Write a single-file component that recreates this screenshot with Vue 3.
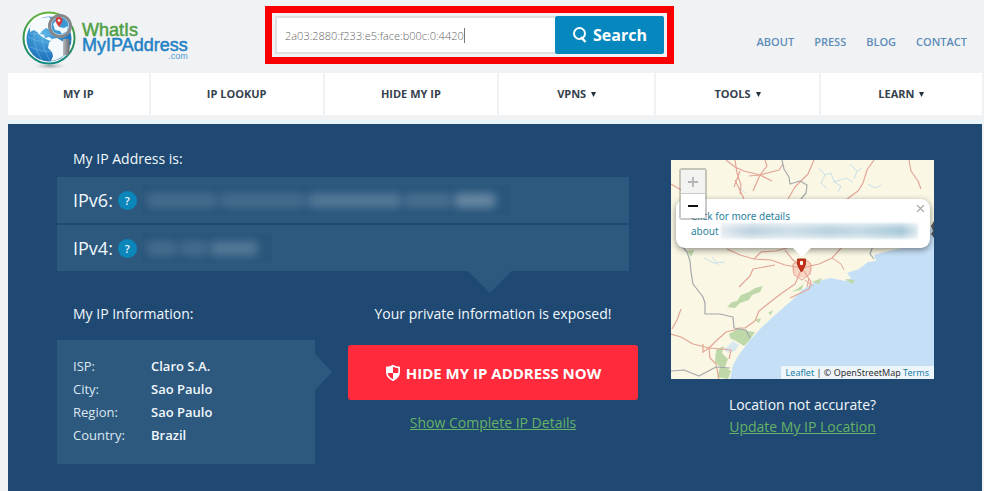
<script setup>
import { ref } from 'vue'

const query = ref('2a03:2880:f233:e5:face:b00c:0:4420')

const topLinks = ['ABOUT', 'PRESS', 'BLOG', 'CONTACT']

const menu = [
  { label: 'MY IP', sub: false },
  { label: 'IP LOOKUP', sub: false },
  { label: 'HIDE MY IP', sub: false },
  { label: 'VPNS', sub: true },
  { label: 'TOOLS', sub: true },
  { label: 'LEARN', sub: true },
]

const details = [
  { name: 'ISP:', value: 'Claro S.A.' },
  { name: 'City:', value: 'Sao Paulo' },
  { name: 'Region:', value: 'Sao Paulo' },
  { name: 'Country:', value: 'Brazil' },
]
</script>

<template>
  <div class="page">
    <header class="header">
      <a class="logo" href="#" aria-label="WhatIsMyIPAddress.com">
        <svg class="globe" viewBox="0 0 60 60" aria-hidden="true">
          <defs>
            <radialGradient id="sea" cx="40%" cy="35%" r="70%">
              <stop offset="0" stop-color="#58b4e8" />
              <stop offset="1" stop-color="#1569b4" />
            </radialGradient>
            <linearGradient id="ring" x1="0" y1="0" x2="0" y2="1">
              <stop offset="0" stop-color="#62b33c" />
              <stop offset="0.55" stop-color="#2f9052" />
              <stop offset="1" stop-color="#128b87" />
            </linearGradient>
            <radialGradient id="shade">
              <stop offset="0" stop-color="#9a9da0" />
              <stop offset="1" stop-color="#f1f2f4" stop-opacity="0" />
            </radialGradient>
            <linearGradient id="grip" x1="0" y1="0" x2="1" y2="0">
              <stop offset="0" stop-color="#b9bbbd" />
              <stop offset="1" stop-color="#696c70" />
            </linearGradient>
          </defs>
          <ellipse cx="29" cy="56" rx="19" ry="4" fill="url(#shade)" />
          <circle cx="28" cy="28" r="25.500" fill="#fff" stroke="url(#ring)" stroke-width="2" />
          <circle cx="28" cy="29" r="22.500" fill="url(#sea)" />
          <g fill="none" stroke="#8bc9ee" stroke-width="0.5" opacity="0.8">
            <path d="M7 27Q22 36 50 31M9 37Q24 44 47 41M14 18Q10 34 21 50M22 11Q17 31 29 51M8 23Q26 27 50 22" />
          </g>
          <path fill="#fff" d="M9 17L13 11L20 8L28 7L31 10L29 14L32 17L29 20L25 18L21 21L19 24L23 25L24 28L28 27L31 29L29 31L25 29L20 26L16 22L13 20L9 22Z" opacity=".95" />
          <path fill="#fff" d="M31 29L36 28L41 31L46 34L49 36L46 42L41 47L35 50L30 51L32 46L31 42L27 38L28 33Z" opacity=".95" />
          <rect x="42" y="29" width="6.5" height="16" rx="1" fill="url(#grip)" />
          <circle cx="39" cy="16" r="10.500" fill="#d7eefb" stroke="#85898d" stroke-width="3" />
          <circle cx="39" cy="16" r="8.500" fill="#3b98d4" />
          <path fill="#eef8fd" d="M32 14L36 10L40 13L38 17L43 18L47 16L46 21L41 24L39 21L34 20Z" />
          <path fill="#d33c38" d="M38 17Q34.500 12 34.500 10.500A3.500 3.500 0 0 1 41.500 10.500Q41.500 12 38 17Z" />
          <circle cx="38" cy="10.500" r="1.300" fill="#fff" />
        </svg>
        <span class="brand">
          <span class="what">WhatIs</span>
          <span class="addr">MyIPAddress</span>
          <span class="com">.com</span>
        </span>
      </a>

      <form class="search" @submit.prevent>
        <div class="field">
          <input v-model="query" type="text" aria-label="IP address" spellcheck="false" />
          <span class="caret"></span>
        </div>
        <button class="go" type="submit">
          <svg viewBox="0 0 16 18" aria-hidden="true">
            <circle cx="7.500" cy="7.500" r="5.500" fill="none" stroke="#fff" stroke-width="2" />
            <path d="M9 11L13.500 16" stroke="#fff" stroke-width="2.400" />
          </svg>
          Search
        </button>
      </form>

      <nav class="top" aria-label="Site">
        <a v-for="link in topLinks" :key="link" href="#">{{ link }}</a>
      </nav>
    </header>

    <nav class="menu" aria-label="Main">
      <a v-for="item in menu" :key="item.label" href="#">
        {{ item.label }}
        <svg v-if="item.sub" viewBox="0 0 5 5" aria-hidden="true"><path d="M0 0H5L2.500 5Z" fill="#22303c" /></svg>
      </a>
    </nav>

    <main class="hero">
      <section class="left">
        <h2 class="title">My IP Address is:</h2>
        <div class="ips">
          <div class="ip">
            <span>IPv6:</span>
            <button class="help" type="button" aria-label="About IPv6">?</button>
            <span class="veil long"><i></i><i></i><i></i><i></i><i></i></span>
          </div>
          <div class="ip">
            <span>IPv4:</span>
            <button class="help" type="button" aria-label="About IPv4">?</button>
            <span class="veil short"><i></i><i></i><i></i></span>
          </div>
        </div>

        <div class="lower">
          <div>
            <h2 class="title">My IP Information:</h2>
            <dl class="info">
              <template v-for="d in details" :key="d.name">
                <dt>{{ d.name }}</dt>
                <dd>{{ d.value }}</dd>
              </template>
            </dl>
          </div>
          <div class="action">
            <p class="title">Your private information is exposed!</p>
            <button class="hide" type="button">
              <svg viewBox="0 0 16 18" aria-hidden="true">
                <path d="M8 0.800Q11 2.600 15 2.800V8Q15 14 8 17.200Q1 14 1 8V2.800Q5 2.600 8 0.800Z" fill="#fff" />
                <path d="M8 9V15.300Q3.200 13 2.700 9ZM8 9V2.800Q10.500 4 13.300 4.200V9Z" fill="#ff2a3b" />
              </svg>
              HIDE MY IP ADDRESS NOW
            </button>
            <a class="green" href="#">Show Complete IP Details</a>
          </div>
        </div>
      </section>

      <section class="right">
        <div class="map">
          <svg class="tiles" viewBox="0 0 263 219" preserveAspectRatio="xMidYMid slice" aria-hidden="true">
            <rect width="263" height="219" fill="#faf8e4" />
            <g fill="none" stroke="#bcd9ea" stroke-width="1" opacity="0.8">
              <path d="M148 8L154 15L160 13L163 22L170 26L167 32M154 15L150 23L156 29M163 22L175 18L182 22M179 4L186 11L191 8M186 11L183 19M197 24L204 28L211 25M22 10L28 16L26 22M68 28L75 33M33 98L43 103L54 102M41 97L48 106" />
            </g>
            <path fill="#c5dff6" d="M59 219L62 205L67 196L79 180L91 167L104 155L119 142L131 130L144 122L160 118L174 121L180 118L176 113L188 109L197 102L205 101L203 95L218 91L234 87L246 82L256 73L263 66V219Z" />
            <g fill="#bfd8aa">
              <path d="M56 147L61 142L66 141L70 135L78 132L84 128L92 126L89 132L81 135L78 140L69 143L64 148Z" />
              <path d="M58 174L68 168L77 171L84 172L78 181L73 186L65 181L59 178Z" />
              <path d="M45 190L53 186L51 193L57 199L54 207L60 211L57 219L46 217L49 207L44 202Z" />
              <path d="M84 160L90 158L88 163ZM97 153L102 150L100 155ZM120 132L126 129L133 124L130 130ZM141 122L151 118L148 124ZM174 119L184 120L181 124ZM16 91L23 90L20 97ZM184 74L190 77L187 82Z" />
            </g>
            <path d="M57 186L62 181L68 185L64 191L57 193L52 189Z" fill="#d9e7f0" />
            <g fill="none" stroke="#e3a596" stroke-width="1.200" stroke-linejoin="round">
              <path d="M55 0L64 7L73 11L89 15L96 6L94 0M89 15L108 10L112 4M89 15L82 31M89 15L101 21M64 0L66 13L70 25L69 34M64 20L73 39M89 15L78 16M63 27L69 11M143 0L137 14L124 27L117 39" />
              <path d="M203 0L196 10L192 23L187 31L176 39M238 0L240 11L247 21L250 29M0 24L12 31L20 39" />
              <path d="M56 89L69 95L83 99L100 100L114 105L131 108L148 104L161 98L172 86M114 90L121 99L131 108M83 99L90 92L105 91L119 87M131 108L124 124L111 133L98 143L88 151L84 161L74 168L67 168M68 127L79 116L82 109L104 105M131 108L140 122L138 129L119 138" />
              <path d="M122 104L123 115L131 120L139 114L140 104L133 99ZM161 98L170 104L173 110M134 120L142 126M138 118L136 127" stroke-width="1" />
              <path d="M67 169L55 172L45 181L38 188L22 184L10 177L0 174M38 188L39 198L45 204L48 219M38 188L32 192M38 188L50 189L60 190L58 199M10 149L6 160L1 169M32 184L32 193" />
            </g>
            <g fill="none" stroke="#a4a8ab" stroke-width="1.200" stroke-linejoin="round">
              <path d="M111 0L113 9L118 17L119 24L129 21L136 25L135 33L130 39M8 83L16 92L19 101L20 112L22 124L32 137L34 143L34 154L49 154L62 157L63 168L75 170L79 178M0 211L13 210L28 216L45 207L59 208M202 86L199 94L203 99" />
            </g>
            <path fill="#50565c" d="M260 66L263 61V78L260 74L262 71Z" />
            <g class="spot">
              <circle cx="131" cy="108" r="10" fill="#f5a08b" opacity="0.4" />
              <path d="M130.500 112Q127 107 126.500 104V99H134.500V104Q134 107 130.500 112Z" fill="#c93018" stroke="#922512" stroke-width="0.800" />
              <rect x="129" y="101" width="3" height="4" rx="1" fill="#fff" />
            </g>
          </svg>
          <div class="popup">
            <button class="close" type="button" aria-label="Close">
              <svg viewBox="0 0 8 8" aria-hidden="true"><path d="M1 1L7 7M7 1L1 7" stroke="#a5a5a5" stroke-width="1.200" /></svg>
            </button>
            <a href="#">Click for more details</a>
            <div class="about"><a href="#">about</a><span class="smudge"></span></div>
          </div>
          <div class="zoom">
            <button type="button" aria-label="Zoom in" disabled>
              <svg viewBox="0 0 12 12" aria-hidden="true"><path d="M6 1V11M1 6H11" stroke="#b4b4b4" stroke-width="1.800" /></svg>
            </button>
            <button type="button" aria-label="Zoom out">
              <svg viewBox="0 0 12 12" aria-hidden="true"><path d="M1 6H11" stroke="#111" stroke-width="2" /></svg>
            </button>
          </div>
          <div class="credit"><a href="#">Leaflet</a> | © OpenStreetMap <a href="#">Terms</a></div>
        </div>
        <p class="title">Location not accurate?</p>
        <a class="green" href="#">Update My IP Location</a>
      </section>
    </main>
  </div>
</template>

<style>
body {
  background: #f1f2f4;
}
</style>

<style scoped>
* {
  box-sizing: border-box;
}

.page {
  font-family: "Open Sans", "Noto Sans", sans-serif;
  font-size: 13px;
  line-height: 20px;
  color: #f2f8fd;
  padding: 0 2px 0 8px;
  display: flex;
  flex-direction: column;
  min-height: 100vh;
}

a {
  text-decoration: none;
  color: inherit;
}

button {
  font: inherit;
  color: inherit;
  border: 0;
  padding: 0;
  cursor: pointer;
}

.header {
  display: grid;
  grid-template-columns: 257px 409px 1fr;
  height: 73px;
}

.logo {
  display: flex;
  align-items: flex-start;
  padding: 10px 0 0 13px;
}

.globe {
  width: 60px;
  height: 60px;
}

.brand {
  display: flex;
  flex-direction: column;
  font-family: "Liberation Sans", Arial, sans-serif;
  font-size: 18px;
  line-height: 15px;
  padding-top: 13px;
  margin-left: 1px;
  -webkit-text-stroke: 0.5px currentColor;
}

.what {
  color: #4fa045;
}

.addr {
  color: #2382c4;
}

.com {
  align-self: flex-end;
  font-size: 9px;
  line-height: 6px;
  color: #4c9bd0;
  -webkit-text-stroke: 0;
}

.search {
  display: flex;
  align-self: start;
  height: 58px;
  margin-top: 6px;
  padding: 3px;
  border: 7px solid #fa0000;
  background: #f1f2f4;
}

.field {
  flex: 1;
  display: flex;
  align-items: center;
  background: #fff;
  border: 2px solid #dedfe0;
  border-right: 0;
  padding-left: 8px;
}

.field input {
  field-sizing: content;
  min-width: 20px;
  border: 0;
  outline: 0;
  padding: 0;
  background: none;
  font-family: "Open Sans", "Noto Sans", sans-serif;
  font-size: 11px;
  font-weight: 300;
  color: #666;
}

.caret {
  width: 1px;
  height: 15px;
  background: #777;
}

.go {
  width: 109px;
  display: flex;
  align-items: center;
  justify-content: center;
  gap: 5px;
  background: #0688bf;
  border-radius: 2px;
  font-size: 16px;
  font-weight: 700;
  color: #fff;
}

.go svg {
  width: 16px;
  height: 18px;
}

.top {
  display: flex;
  justify-content: flex-end;
  gap: 20px;
  padding: 32px 15px 0 0;
  font-size: 11px;
  font-weight: 600;
  color: #5d8db9;
}

.menu {
  display: grid;
  grid-template-columns: 142fr 174fr 174fr 157fr 164fr 163fr;
  gap: 2px;
  height: 42px;
}

.menu a {
  display: flex;
  align-items: center;
  justify-content: center;
  gap: 5px;
  background: #fff;
  font-size: 11px;
  font-weight: 700;
  color: #35424d;
}

.menu svg {
  width: 5px;
  height: 5px;
}

.hero {
  flex: 1;
  display: grid;
  grid-template-columns: 572fr 263fr;
  column-gap: 42px;
  margin-top: 5px;
  padding: 25px 48px 24px 49px;
  border-top: 4px solid #e8f4fb;
  background: #1f4972;
  background-clip: padding-box;
}

.title {
  margin: 0;
  font-size: 14px;
  line-height: 20px;
  font-weight: 400;
}

.left .title {
  padding-left: 16px;
}

.ips {
  position: relative;
  display: grid;
  gap: 2px;
  margin-top: 8px;
}

.ips::after {
  content: "";
  position: absolute;
  top: 100%;
  left: 76%;
  width: 44px;
  height: 22px;
  margin-left: -24px;
  background: #2d597f;
  clip-path: polygon(0 0, 100% 0, 50% 100%);
}

.ip {
  display: flex;
  align-items: center;
  gap: 5px;
  height: 46px;
  padding-left: 16px;
  background: #2d597f;
  font-size: 18px;
}

.help {
  width: 19px;
  height: 19px;
  border-radius: 50%;
  background: #0a86bb;
  font-size: 11px;
  line-height: 19px;
  font-weight: 600;
}

.veil {
  display: flex;
  align-items: center;
  gap: 2px;
  height: 30px;
  padding: 0 14px 0 4px;
  overflow: hidden;
  background: #2a567c;
}

.veil i {
  height: 15px;
  border-radius: 6px;
  background: #7492ab;
  opacity: 0.35;
  filter: blur(4px);
}

.long i:nth-child(1) { width: 72px; }
.long i:nth-child(2) { width: 86px; }
.long i:nth-child(3) { width: 94px; opacity: 0.55; }
.long i:nth-child(4) { width: 48px; opacity: 0.4; }
.long i:nth-child(5) { width: 42px; opacity: 0.8; }
.short i:nth-child(1) { width: 32px; }
.short i:nth-child(2) { width: 28px; }
.short i:nth-child(3) { width: 48px; opacity: 0.55; }

.lower {
  display: grid;
  grid-template-columns: 258fr 290fr;
  column-gap: 33px;
  margin-top: 33px;
  margin-right: -9px;
}

.info {
  position: relative;
  display: grid;
  grid-template-columns: 78px 1fr;
  grid-auto-rows: 23px;
  align-items: center;
  margin: 16px 0 0;
  padding: 14px 16px 18px;
  background: #2d597f;
}

.info::after {
  content: "";
  position: absolute;
  top: 14px;
  left: 100%;
  width: 17px;
  height: 36px;
  background: #2d597f;
  clip-path: polygon(0 0, 100% 50%, 0 100%);
}

.info dt {
  color: #dbe6ef;
}

.info dd {
  margin: 0;
  font-weight: 600;
}

.action {
  display: flex;
  flex-direction: column;
  align-items: center;
}

.action .title {
  padding: 0;
}

.hide {
  display: flex;
  align-items: center;
  justify-content: center;
  gap: 5px;
  width: 100%;
  height: 55px;
  margin: 21px 0 13px;
  border-radius: 3px;
  background: #ff2a3b;
  font-size: 15px;
  font-weight: 700;
  color: #fff;
}

.hide svg {
  width: 16px;
  height: 18px;
}

.green {
  font-size: 14px;
  color: #66b266;
  text-decoration: underline;
}

.right {
  display: flex;
  flex-direction: column;
  align-items: center;
  padding-top: 11px;
}

.right .title {
  margin: 16px 0 2px;
}

.map {
  position: relative;
  width: 100%;
  aspect-ratio: 263 / 219;
  overflow: hidden;
  font-family: "Noto Sans", "Open Sans", sans-serif;
  font-size: 10px;
  line-height: 13px;
}

.tiles {
  display: block;
  width: 100%;
  height: 100%;
}

.popup {
  position: absolute;
  left: 5px;
  right: 4px;
  top: 39px;
  height: 49px;
  padding: 11px 12px 0 15px;
  border-radius: 9px;
  background: #fff;
  box-shadow: 0 2px 6px rgba(0, 0, 0, 0.45);
  color: #2a7f9d;
}

.popup::after {
  content: "";
  position: absolute;
  top: 100%;
  left: 50%;
  width: 18px;
  height: 9px;
  margin-left: -10px;
  background: #fff;
  clip-path: polygon(0 0, 100% 0, 50% 100%);
}

.close {
  position: absolute;
  top: 5px;
  right: 5px;
  width: 9px;
  height: 9px;
  background: none;
}

.close svg {
  display: block;
}

.about {
  display: flex;
  align-items: center;
  gap: 2px;
}

.smudge {
  flex: 1;
  height: 16px;
  background: linear-gradient(#ffffff88, transparent 40%, transparent 60%, #ffffff88), linear-gradient(90deg, #e4ebf0, #bed3df 15%, #cfdfe8 35%, #b9d2df 55%, #c5dae4 70%, #a9c9d9 92%, #e0ebf1);
  filter: blur(1px);
}

.zoom {
  position: absolute;
  left: 8px;
  top: 8px;
  border: 2px solid rgba(120, 120, 120, 0.4);
  border-radius: 3px;
}

.zoom button {
  display: grid;
  place-items: center;
  width: 24px;
  height: 24px;
  background: #fff;
}

.zoom button:disabled {
  background: #f3f3f1;
  border-bottom: 1px solid #ccc;
}

.zoom svg {
  width: 12px;
  height: 12px;
}

.credit {
  position: absolute;
  right: 0;
  bottom: 0;
  padding: 0 5px;
  background: rgba(255, 255, 255, 0.7);
  font-size: 9px;
  color: #333;
}

.credit a {
  color: #1c80a6;
}
</style>
